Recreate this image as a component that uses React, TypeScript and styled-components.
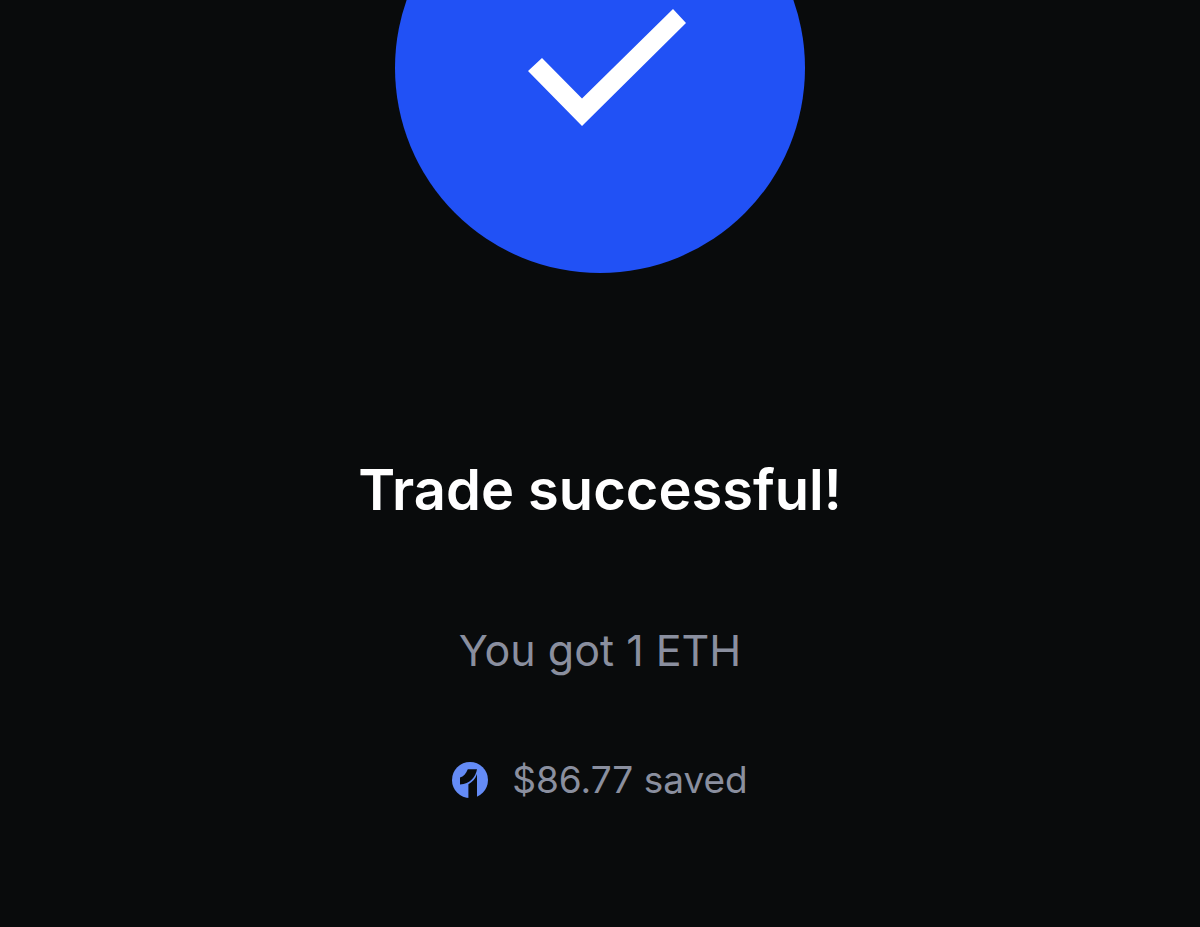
import React from "react";
import styled, { createGlobalStyle } from "styled-components";

const GlobalStyle = createGlobalStyle`
  * { box-sizing: border-box; }
  html, body { margin: 0; background: #090b0c; }
  body { font-family: Inter, "Liberation Sans", sans-serif; -webkit-font-smoothing: antialiased; }
`;

const Screen = styled.main`
  display: flex;
  flex-direction: column;
  align-items: center;
  min-height: 100vh;
  overflow: hidden;
  background: #090b0c;
  text-align: center;
`;

const SuccessBadge = styled.svg`
  display: block;
  flex: none;
  width: 410px;
  height: 410px;
  margin-top: -137px;
`;

const Title = styled.h1`
  margin: 185px 0 0;
  color: #ffffff;
  font-size: 56px;
  font-weight: 600;
  line-height: 64px;
`;

const Message = styled.p<{ $size: number; $gap: number }>`
  display: flex;
  align-items: center;
  gap: 24px;
  margin: ${({ $gap }) => $gap}px 0 0;
  color: #8a8f9f;
  font-size: ${({ $size }) => $size}px;
  font-weight: 400;
  line-height: 56px;
`;

const SavingsIcon = styled.svg`
  flex: none;
  width: 36px;
  height: 36px;
`;

export default function App() {
  return (
    <>
      <GlobalStyle />
      <Screen>
        <SuccessBadge viewBox="0 0 410 410" role="img" aria-label="Success">
          <circle cx="205" cy="205" r="205" fill="#2151f5" />
          <path d="M133 208L147 195L187 235.5L278 146L291 160L187 263Z" fill="#fff" />
        </SuccessBadge>
        <Title>Trade successful!</Title>
        <Message $size={43} $gap={100}>You got 1 ETH</Message>
        <Message $size={37} $gap={74}>
          <SavingsIcon viewBox="0 0 36 36" aria-hidden="true">
            <circle cx="18" cy="18" r="18" fill="#648bf6" />
            <path
              d="M8 15.4C11.5 14.6 14 11.8 15.8 7.2H25C23.8 15 18 21.8 8 22.4Z"
              fill="#090b0c"
            />
            <path d="M16.4 22.2C20.6 20 23.6 16.4 25 12V37H16.4Z" fill="#090b0c" />
          </SavingsIcon>
          <span>$86.77 saved</span>
        </Message>
      </Screen>
    </>
  );
}
